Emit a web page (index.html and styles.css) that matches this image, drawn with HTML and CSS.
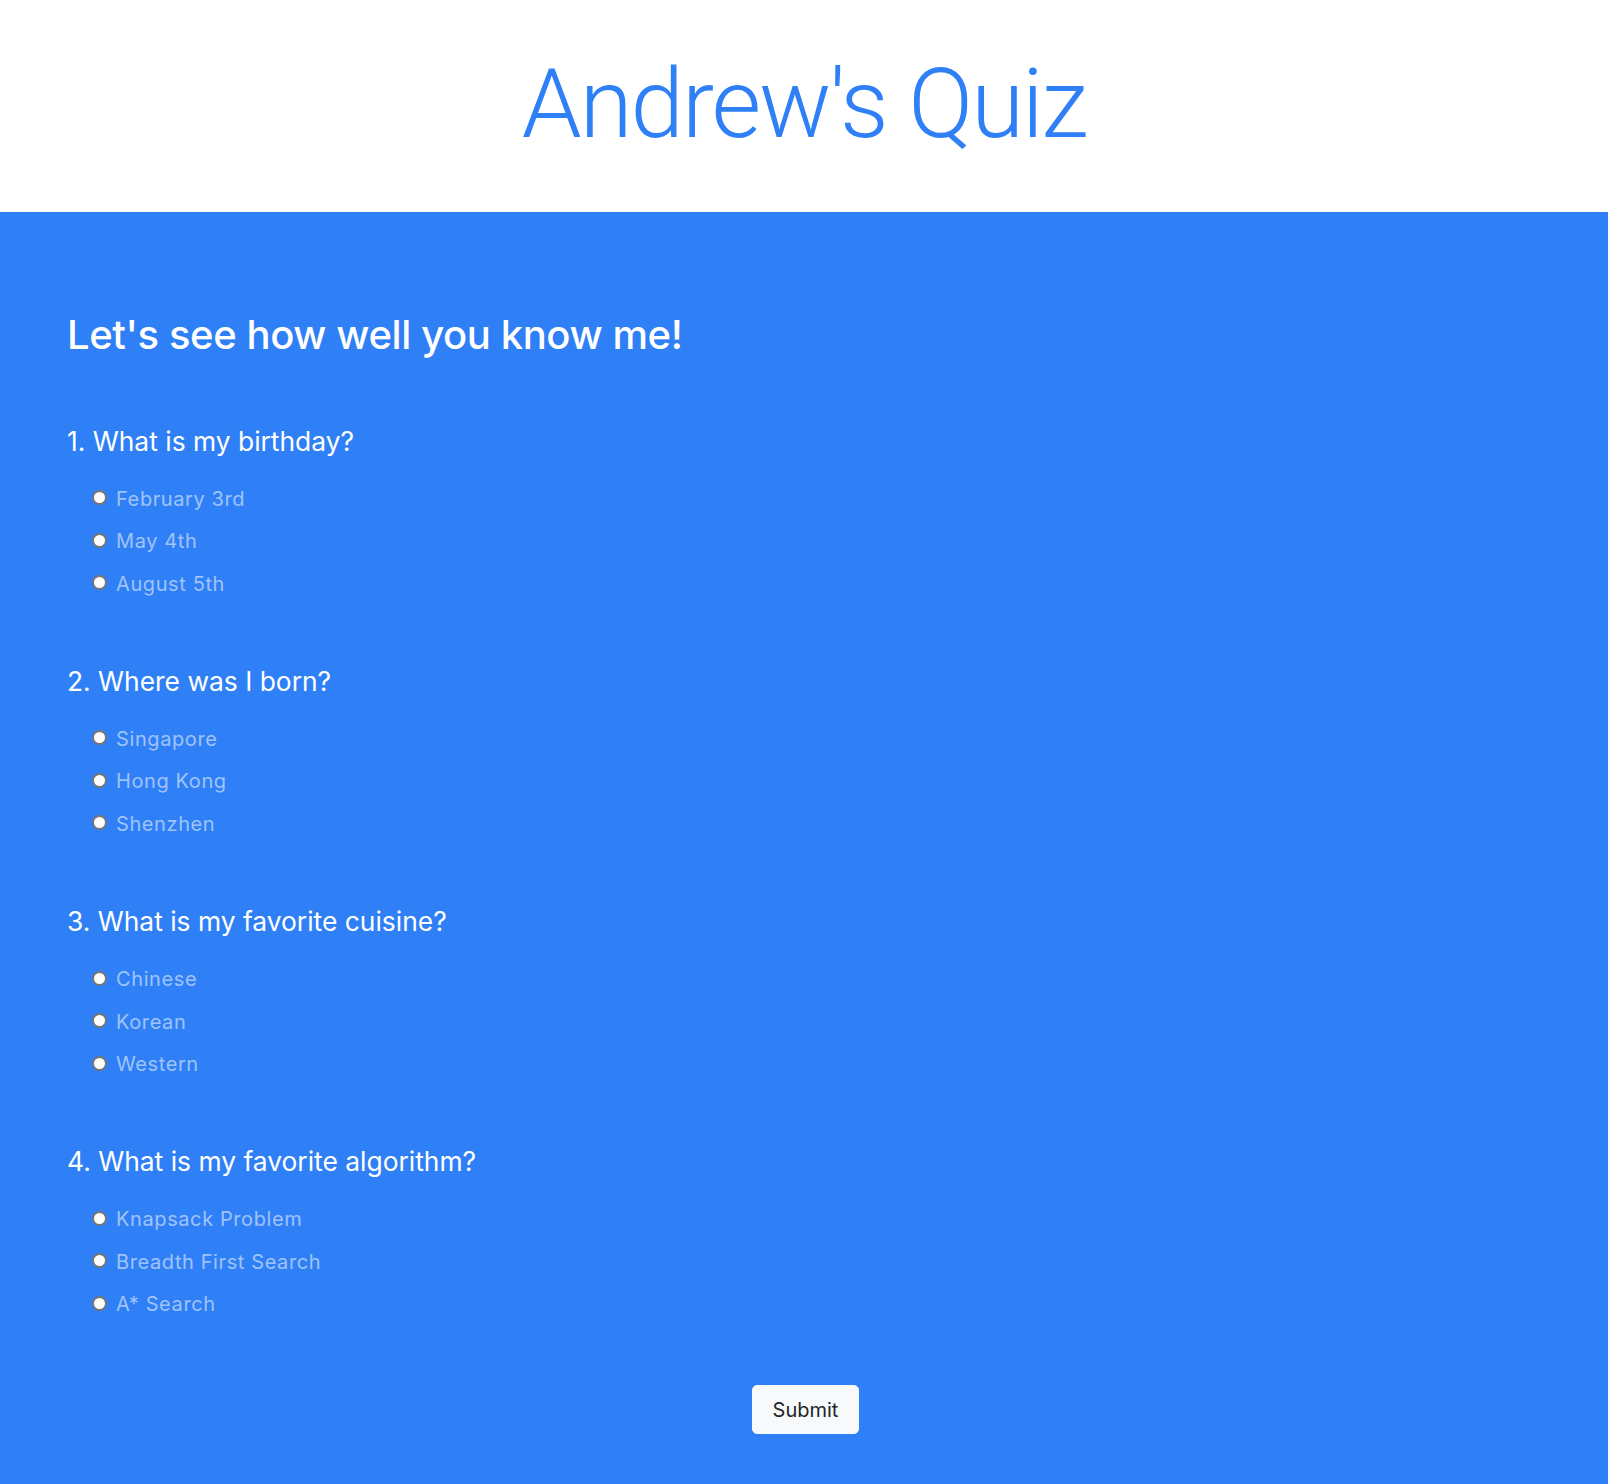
FILE: index.html
```html
<!DOCTYPE html>
<html lang="en">
<head>
<meta charset="utf-8">
<title>Andrew's Quiz</title>
<link rel="stylesheet" href="styles.css">
</head>
<body>
<header class="hero">
  <h1 class="hero-title">Andrew's Quiz</h1>
</header>
<main class="quiz">
  <form class="quiz-form">
    <h2 class="quiz-intro">Let's see how well you know me!</h2>
    <div class="questions">
      <section class="question">
        <h3 class="question-title">1. What is my birthday?</h3>
        <div class="options">
          <label class="option"><input class="radio" type="radio" name="q1" value="a"><span>February 3rd</span></label>
          <label class="option"><input class="radio" type="radio" name="q1" value="b"><span>May 4th</span></label>
          <label class="option"><input class="radio" type="radio" name="q1" value="c"><span>August 5th</span></label>
        </div>
      </section>
      <section class="question">
        <h3 class="question-title">2. Where was I born?</h3>
        <div class="options">
          <label class="option"><input class="radio" type="radio" name="q2" value="a"><span>Singapore</span></label>
          <label class="option"><input class="radio" type="radio" name="q2" value="b"><span>Hong Kong</span></label>
          <label class="option"><input class="radio" type="radio" name="q2" value="c"><span>Shenzhen</span></label>
        </div>
      </section>
      <section class="question">
        <h3 class="question-title">3. What is my favorite cuisine?</h3>
        <div class="options">
          <label class="option"><input class="radio" type="radio" name="q3" value="a"><span>Chinese</span></label>
          <label class="option"><input class="radio" type="radio" name="q3" value="b"><span>Korean</span></label>
          <label class="option"><input class="radio" type="radio" name="q3" value="c"><span>Western</span></label>
        </div>
      </section>
      <section class="question">
        <h3 class="question-title">4. What is my favorite algorithm?</h3>
        <div class="options">
          <label class="option"><input class="radio" type="radio" name="q4" value="a"><span>Knapsack Problem</span></label>
          <label class="option"><input class="radio" type="radio" name="q4" value="b"><span>Breadth First Search</span></label>
          <label class="option"><input class="radio" type="radio" name="q4" value="c"><span>A* Search</span></label>
        </div>
      </section>
    </div>
    <div class="actions">
      <button class="submit" type="submit">Submit</button>
    </div>
  </form>
</main>
</body>
</html>
```
FILE: styles.css
```css
* { box-sizing: border-box; }
html, body { margin: 0; padding: 0; }
body {
  font-family: Inter, "Noto Sans", "Liberation Sans", sans-serif;
  background: #2f7ff6;
  color: #fff;
}
.hero {
  background: #fff;
  height: 212px;
  padding-top: 47px;
  text-align: center;
}
.hero-title {
  margin: 0;
  font-family: Roboto, Inter, "Liberation Sans", sans-serif;
  font-size: 96px;
  font-weight: 300;
  line-height: 1.2;
  color: #2f7ff6;
  letter-spacing: -2px;
}
.quiz {
  background: #2f7ff6;
  padding: 99px 64px 49px 67px;
}
.quiz-intro {
  margin: 0 0 66.5px;
  font-size: 40px;
  font-weight: 500;
  line-height: 1.2;
  letter-spacing: -0.4px;
}
.questions {
  display: flex;
  flex-direction: column;
  gap: 67px;
}
.question-title {
  margin: 0 0 26.5px;
  font-size: 26.4px;
  font-weight: 400;
  line-height: 1.2;
}
.options {
  display: flex;
  flex-direction: column;
  gap: 12.5px;
  padding-left: 25px;
}
.option {
  display: flex;
  align-items: center;
  gap: 9px;
  height: 30px;
  font-size: 20px;
  line-height: 30px;
  letter-spacing: 0.6px;
  color: rgba(255, 255, 255, 0.55);
}
.radio {
  appearance: none;
  -webkit-appearance: none;
  margin: 0;
  width: 15px;
  height: 15px;
  border-radius: 50%;
  background: #fff;
  border: 2px solid #767676;
  flex: none;
  position: relative;
  top: -1px;
}
.actions {
  display: flex;
  justify-content: center;
  margin-top: 66px;
}
.submit {
  font-family: inherit;
  font-size: 20px;
  line-height: 30px;
  padding: 8.5px 20px;
  background: #f8f9fa;
  color: #212529;
  border: 1px solid #f8f9fa;
  border-radius: 5px;
}
```
